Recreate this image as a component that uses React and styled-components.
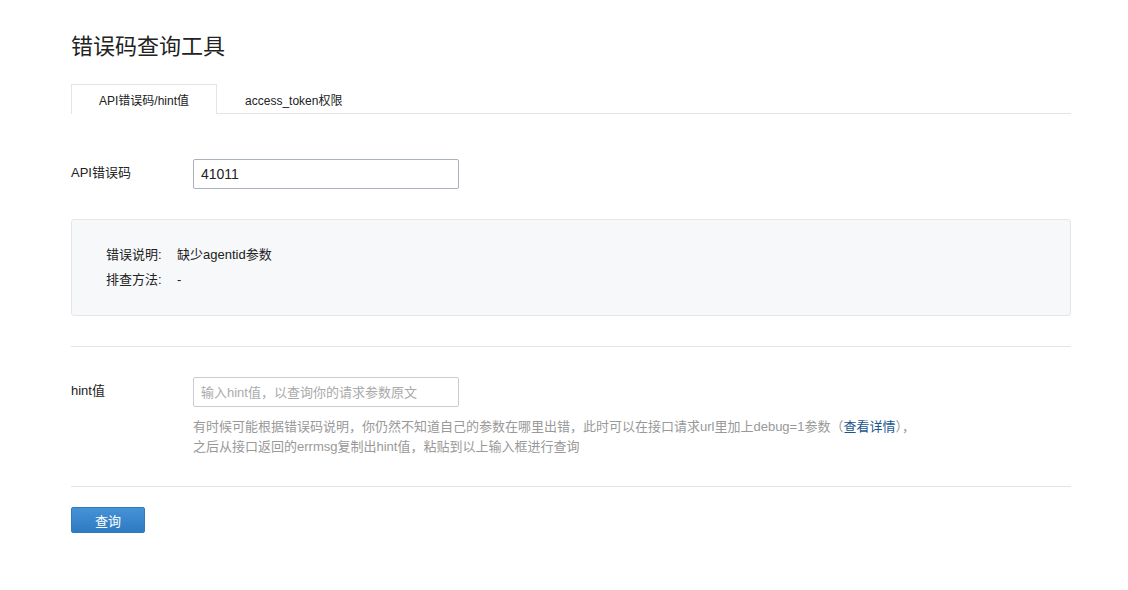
import styled, { createGlobalStyle } from "styled-components";

const GlobalStyle = createGlobalStyle`
  html, body {
    margin: 0;
    padding: 0;
    background: #fff;
    font-family: "Liberation Sans", Arial, "Noto Sans CJK SC", sans-serif;
    color: #222;
  }
  * { box-sizing: border-box; }
`

const Page = styled.div`
  width: 1000px;
  margin-left: 71px;
  padding-top: 33px;
`
const Title = styled.h1`
  margin: 0;
  font-size: 22px;
  font-weight: normal;
  line-height: 28px;
  color: #222;
`
const Tabs = styled.div`
  display: flex;
  margin-top: 23px;
  border-bottom: 1px solid #e4e4e4;
  height: 30px;
`
const Tab = styled.div`
  padding: 2px 27px 0;
  font-size: 12px;
  line-height: 28px;
  height: 30px;
  color: #222;
  border: 1px solid ${p => (p.$active ? "#e4e4e4" : "transparent")};
  border-bottom: none;
  background: ${p => (p.$active ? "#fff" : "transparent")};
  cursor: pointer;
`
const Row = styled.div`
  display: flex;
  align-items: flex-start;
  margin-top: ${p => p.$top || 0}px;
`
const Label = styled.div`
  width: 122px;
  font-size: 13px;
  line-height: 28px;
  color: #222;
`
const Field = styled.div`
  display: flex;
  flex-direction: column;
`
const Input = styled.input`
  width: 266px;
  height: 30px;
  padding: 0 7px;
  font-size: 14px;
  font-family: inherit;
  color: #222;
  border: 1px solid ${p => (p.$muted ? "#cccccc" : "#a8b1bc")};
  border-radius: 2px;
  outline: none;
  &::placeholder {
    color: #aaa;
    font-size: 13px;
  }
`
const InfoBox = styled.div`
  margin-top: 30px;
  height: 97px;
  padding: 22px 34px;
  background: #f7f8fa;
  border: 1px solid #e4e6e9;
  border-radius: 3px;
`
const InfoLine = styled.div`
  display: flex;
  font-size: 13px;
  line-height: 25px;
  color: #222;
`
const InfoKey = styled.span`
  width: 71px;
`
const Divider = styled.hr`
  margin: ${p => p.$top}px 0 0;
  border: none;
  border-top: 1px solid #e4e4e4;
`
const Help = styled.p`
  margin: 10px 0 0;
  font-size: 13px;
  line-height: 20px;
  color: #999;
`
const Link = styled.a`
  color: #1b5590;
  text-decoration: none;
`
const Button = styled.button`
  margin-top: 20px;
  width: 74px;
  height: 26px;
  font-size: 13px;
  font-family: inherit;
  color: #fff;
  border: 1px solid #2f79bd;
  border-radius: 2px;
  background: linear-gradient(#4592d7, #2f7bc3);
  cursor: pointer;
`

export default function App() {
  return (
    <>
      <GlobalStyle />
      <Page>
        <Title>错误码查询工具</Title>
        <Tabs>
          <Tab $active>API错误码/hint值</Tab>
          <Tab>access_token权限</Tab>
        </Tabs>
        <Row $top={45}>
          <Label>API错误码</Label>
          <Input defaultValue="41011" />
        </Row>
        <InfoBox>
          <InfoLine>
            <InfoKey>错误说明:</InfoKey>
            <span>缺少agentid参数</span>
          </InfoLine>
          <InfoLine>
            <InfoKey>排查方法:</InfoKey>
            <span>-</span>
          </InfoLine>
        </InfoBox>
        <Divider $top={30} />
        <Row $top={30}>
          <Label>hint值</Label>
          <Field>
            <Input $muted placeholder="输入hint值，以查询你的请求参数原文" />
            <Help>
              有时候可能根据错误码说明，你仍然不知道自己的参数在哪里出错，此时可以在接口请求url里加上debug=1参数（<Link href="#">查看详情</Link>），
              <br />
              之后从接口返回的errmsg复制出hint值，粘贴到以上输入框进行查询
            </Help>
          </Field>
        </Row>
        <Divider $top={29} />
        <Button>查询</Button>
      </Page>
    </>
  );
}
